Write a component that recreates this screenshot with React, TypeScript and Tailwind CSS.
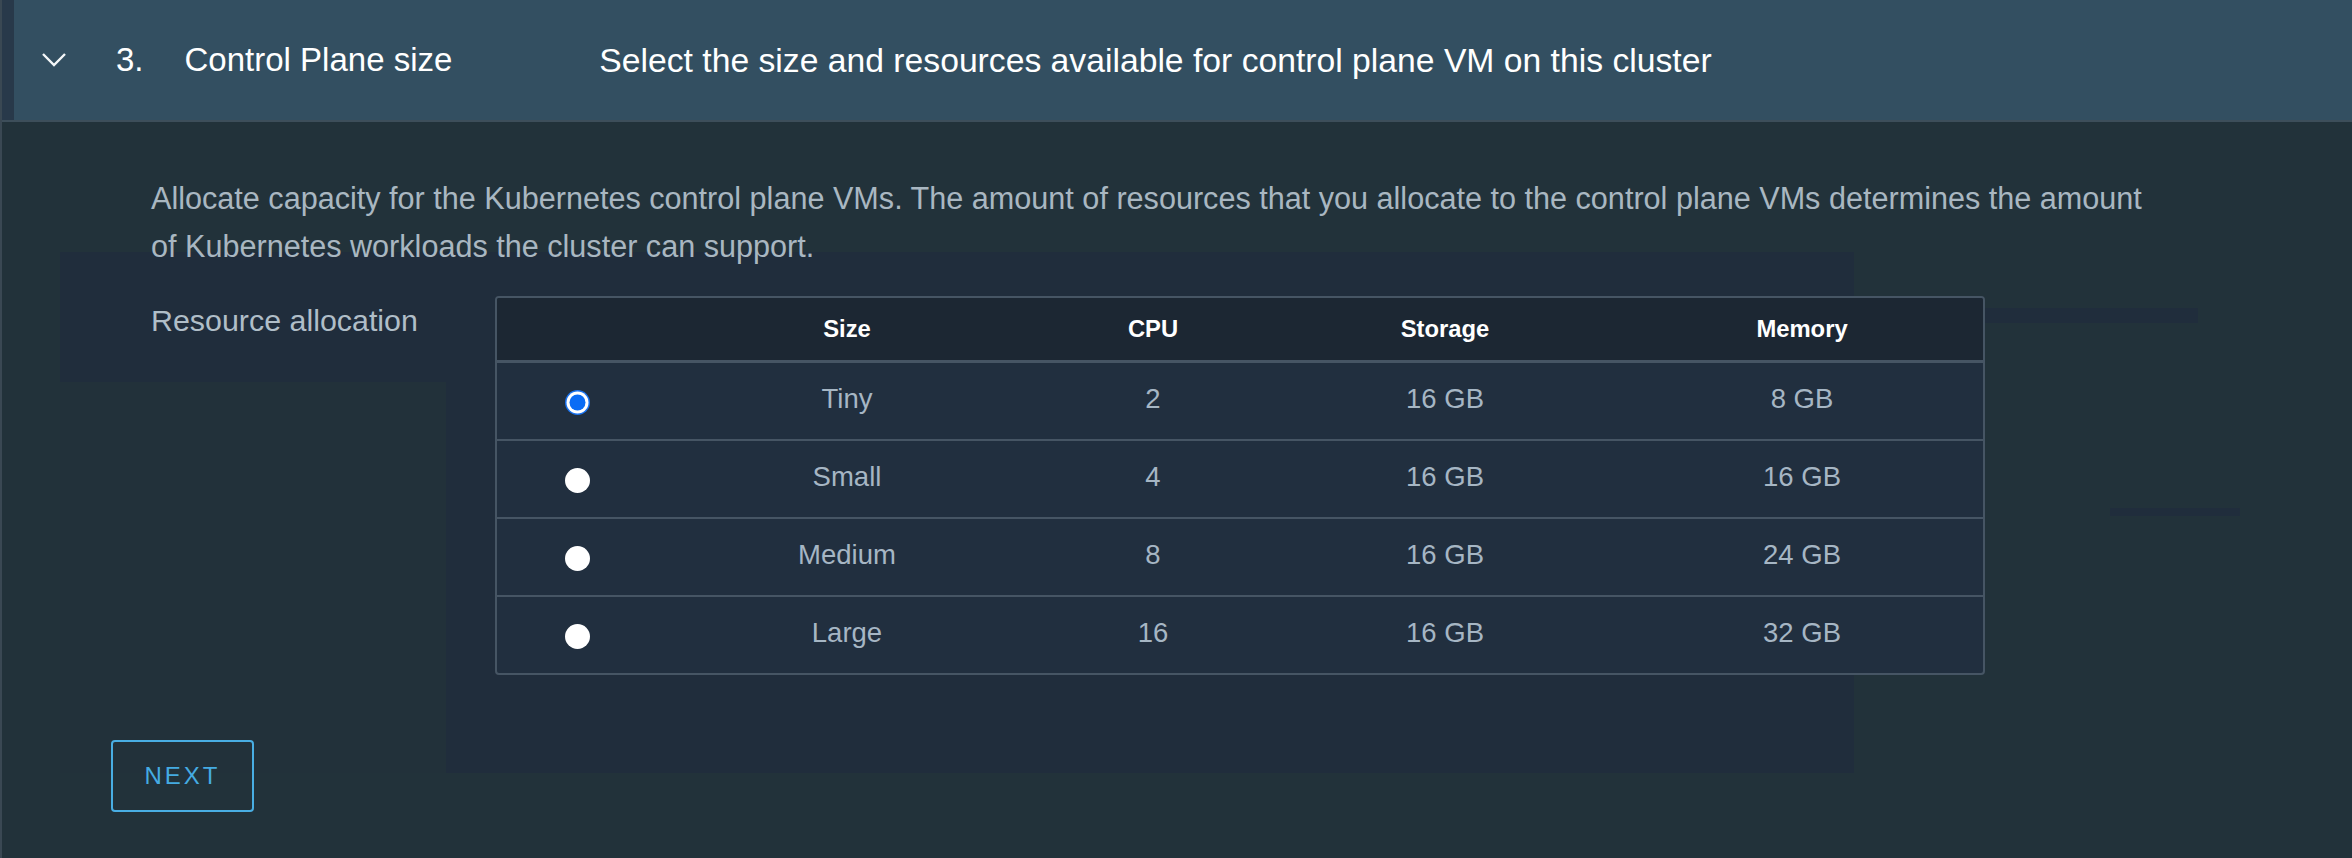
const rows = [
  { size: "Tiny", cpu: "2", storage: "16 GB", memory: "8 GB" },
  { size: "Small", cpu: "4", storage: "16 GB", memory: "16 GB" },
  { size: "Medium", cpu: "8", storage: "16 GB", memory: "24 GB" },
  { size: "Large", cpu: "16", storage: "16 GB", memory: "32 GB" },
];

function Radio({ checked }: { checked: boolean }) {
  return (
    <svg width="25" height="25" viewBox="0 0 25 25">
      {checked ? (
        <>
          <circle cx="12.5" cy="12.5" r="12.5" fill="#1a73f0" />
          <circle cx="12.5" cy="12.5" r="11" fill="#ffffff" />
          <circle cx="12.5" cy="12.5" r="8" fill="#0a6cf5" />
        </>
      ) : (
        <circle cx="12.5" cy="12.5" r="12.5" fill="#ffffff" />
      )}
    </svg>
  );
}

export default function App() {
  const selected = 0;
  const grid = "grid grid-cols-[160px_380px_232px_352px_362px] items-center";

  return (
    <div
      className="w-[2352px] h-[858px] bg-[#22323a] border-l-2 border-[#3a4853] overflow-hidden"
      style={{ fontFamily: '"Liberation Sans", Arial, sans-serif' }}
    >
      {/* Header */}
      <div className="flex h-[122px] border-b-2 border-[#3d4e5a] bg-[#334f61]">
        <div className="w-[12px] bg-[#28394a]" />
        <div className="flex items-center leading-[40px] text-white">
          <svg width="26" height="16" viewBox="0 0 26 16" className="ml-[27px]">
            <path d="M2 2 L13 13 L24 2" fill="none" stroke="#f4f7f9" strokeWidth="2.4" />
          </svg>
          <span className="ml-[49px] text-[33px]">3.</span>
          <span className="ml-[41px] text-[33px]">Control Plane size</span>
          <span className="ml-[147px] text-[33.7px]">
            Select the size and resources available for control plane VM on this cluster
          </span>
        </div>
      </div>

      {/* Content */}
      <div className="relative h-[736px]">
        {/* faint background ghost */}
        <div className="absolute left-[58px] top-[130px] w-[1794px] h-[521px] bg-[#202d3c]" />
        <div className="absolute left-[58px] top-[260px] w-[386px] h-[391px] bg-[#22313a]" />
        <div className="absolute left-[1983px] top-[186px] w-[213px] h-[15px] bg-[#202d3c]" />
        <div className="absolute left-[2108px] top-[386px] w-[130px] h-[8px] bg-[#202d3c]" />

        <div className="relative pt-[52px]">
          <p className="ml-[149px] text-[30.6px] leading-[48px] text-[#a9b7c1]">
            Allocate capacity for the Kubernetes control plane VMs. The amount of resources that you allocate to the control plane VMs determines the amount
            <br />
            of Kubernetes workloads the cluster can support.
          </p>

          <div className="flex mt-[26px] ml-[149px]">
            <div className="w-[344px] text-[30.4px] leading-[48px] text-[#b0bec8]">Resource allocation</div>

            <div className="w-[1490px] border-2 border-[#465564] rounded-[4px] overflow-hidden bg-[#212f3f]">
              <div className={`${grid} h-[65px] bg-[#1c2733] border-b-[3px] border-[#465564] text-[23.8px] font-bold text-white text-center`}>
                <div />
                <div>Size</div>
                <div>CPU</div>
                <div>Storage</div>
                <div>Memory</div>
              </div>
              {rows.map((r, i) => (
                <div
                  key={r.size}
                  className={`${grid} pb-[5px] text-[27.5px] text-[#a6b6c4] text-center ${
                    i < rows.length - 1 ? "h-[78px] border-b-2 border-[#465564]" : "h-[76px]"
                  }`}
                >
                  <div className="flex justify-center pt-[7px]">
                    <Radio checked={i === selected} />
                  </div>
                  <div>{r.size}</div>
                  <div>{r.cpu}</div>
                  <div>{r.storage}</div>
                  <div>{r.memory}</div>
                </div>
              ))}
            </div>
          </div>

          <button className="mt-[65px] ml-[109px] w-[143px] h-[72px] border-2 border-[#49aee3] rounded-[4px] text-[24px] tracking-[3px] text-[#45abe2]">
            NEXT
          </button>
        </div>
      </div>
    </div>
  );
}
